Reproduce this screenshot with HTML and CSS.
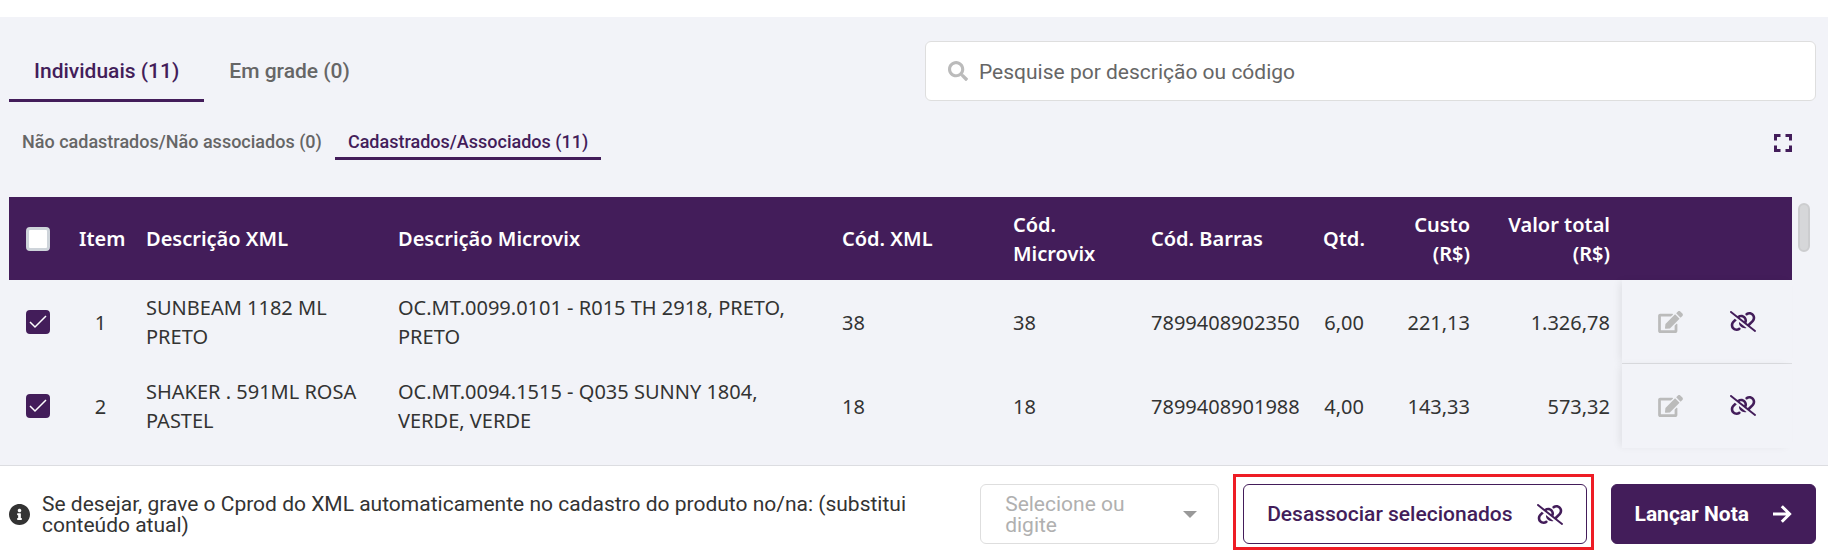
FILE: index.html
```html
<!DOCTYPE html>
<html lang="pt-BR">

<head>
    <meta charset="UTF-8">
    <meta name="viewport" content="width=device-width, initial-scale=1.0">
    <title>Produtos da nota</title>
    <link rel="stylesheet" href="styles.css">
</head>

<body>
    <!-- ícones reutilizados -->
    <svg class="sprite" aria-hidden="true">
        <symbol id="icon-edit" viewBox="0 0 576 512">
            <path d="M402.6 83.2l90.2 90.2c3.8 3.8 3.8 10 0 13.8L274.4 405.6l-92.8 10.3c-12.4 1.4-22.9-9.1-21.5-21.5l10.3-92.8L388.8 83.2c3.8-3.8 10-3.8 13.800 0zm162-22.900l-48.800-48.800c-15.200-15.200-39.900-15.200-55.200 0l-35.400 35.400c-3.800 3.800-3.800 10 0 13.800l90.200 90.200c3.800 3.800 10 3.800 13.800 0l35.400-35.400c15.200-15.300 15.200-40 0-55.200zM384 346.200V448H64V128h229.800c3.200 0 6.200-1.300 8.500-3.500l40-40c7.600-7.600 2.200-20.500-8.500-20.500H48C21.500 64 0 85.500 0 112v352c0 26.500 21.500 48 48 48h352c26.500 0 48-21.500 48-48V306.200c0-10.700-12.900-16-20.500-8.500l-40 40c-2.200 2.300-3.500 5.300-3.500 8.500z"/>
        </symbol>
        <symbol id="icon-unlink" viewBox="0 0 640 512">
            <path d="M38.8 5.1C28.4-3.1 13.3-1.2 5.1 9.2S-1.2 34.7 9.2 42.9l592 464c10.4 8.2 25.5 6.3 33.7-4.1s6.3-25.5-4.1-33.7L489.3 358.2l90.5-90.5c56.5-56.5 56.5-148 0-204.5c-50-50-128.800-56.500-186.300-15.400l-1.600 1.100c-14.400 10.300-17.700 30.300-7.400 44.600s30.300 17.700 44.600 7.400l1.600-1.100c32.100-22.900 76-19.300 103.800 8.600c31.500 31.500 31.500 82.500 0 114l-96 96-31.900-25C430.900 239.600 420.100 175.100 377 132c-52.200-52.300-134.500-56.200-191.300-11.700L38.800 5.100zM239 162c30.100-14.900 67.700-9.900 92.800 15.300c20 20 27.500 48.300 21.700 74.500L239 162zM406.600 416.400L220.900 270c-2.100 39.800 12.200 80.100 42.200 110c38.900 38.900 94.400 51 143.600 36.300zm-290-228.500L60.200 244.300c-56.500 56.500-56.500 148 0 204.500c50 50 128.800 56.500 186.300 15.400l1.600-1.100c14.400-10.300 17.700-30.300 7.400-44.600s-30.300-17.700-44.600-7.400l-1.600 1.100c-32.100 22.900-76 19.300-103.800-8.600C74 372 74 321 105.500 289.500l61.800-61.800-50.600-39.900z"/>
        </symbol>
    </svg>

    <div class="page">
        <main class="panel">
            <div class="toolbar">
                <nav class="tabs">
                    <button type="button" class="tab active">Individuais (11)</button>
                    <button type="button" class="tab">Em grade (0)</button>
                </nav>
                <div class="search">
                    <svg class="search-icon" viewBox="0 0 512 512" aria-hidden="true">
                        <path d="M505 442.7L405.3 343c-4.5-4.5-10.6-7-17-7H372c27.6-35.3 44-79.7 44-128C416 93.1 322.9 0 208 0S0 93.1 0 208s93.1 208 208 208c48.3 0 92.7-16.4 128-44v16.3c0 6.4 2.5 12.5 7 17l99.7 99.7c9.4 9.4 24.6 9.4 33.9 0l28.3-28.3c9.4-9.4 9.4-24.6.1-34zM208 336c-70.700 0-128-57.200-128-128 0-70.700 57.200-128 128-128 70.700 0 128 57.200 128 128 0 70.700-57.200 128-128 128z"/>
                    </svg>
                    <input type="text" id="search" aria-label="Pesquisar" placeholder="Pesquise por descrição ou código">
                </div>
            </div>

            <div class="subbar">
                <nav class="subtabs">
                    <button type="button" class="subtab">Não cadastrados/Não associados (0)</button>
                    <button type="button" class="subtab active">Cadastrados/Associados (11)</button>
                </nav>
                <button type="button" class="expand" aria-label="Tela cheia">
                    <svg viewBox="0 0 18 18" aria-hidden="true">
                        <path fill="none" stroke="currentColor" stroke-width="3" d="M1.5 6.5v-5h5M11.5 1.5h5v5M16.5 11.5v5h-5M6.5 16.5h-5v-5"/>
                    </svg>
                </button>
            </div>

            <div class="table-area">
                <table class="items">
                    <colgroup>
                        <col class="col-check">
                        <col class="col-item">
                        <col class="col-xml">
                        <col class="col-microvix">
                        <col class="col-cod-xml">
                        <col class="col-cod-microvix">
                        <col class="col-barras">
                        <col class="col-qtd">
                        <col class="col-custo">
                        <col class="col-total">
                        <col class="col-actions">
                    </colgroup>
                    <thead>
                        <tr>
                            <th class="check"><input type="checkbox" class="checkbox" aria-label="Selecionar todos"></th>
                            <th class="center">Item</th>
                            <th>Descrição XML</th>
                            <th>Descrição Microvix</th>
                            <th>Cód. XML</th>
                            <th>Cód. Microvix</th>
                            <th>Cód. Barras</th>
                            <th class="right">Qtd.</th>
                            <th class="right">Custo (R$)</th>
                            <th class="right">Valor total (R$)</th>
                            <th></th>
                        </tr>
                    </thead>
                    <tbody>
                        <tr>
                            <td class="check"><input type="checkbox" class="checkbox" aria-label="Selecionar item 1" checked></td>
                            <td class="center">1</td>
                            <td>SUNBEAM 1182 ML PRETO</td>
                            <td>OC.MT.0099.0101 - R015 TH 2918, PRETO, PRETO</td>
                            <td>38</td>
                            <td>38</td>
                            <td>7899408902350</td>
                            <td class="right">6,00</td>
                            <td class="right">221,13</td>
                            <td class="right">1.326,78</td>
                            <td class="actions">
                                <div class="action-list">
                                    <button type="button" class="action" aria-label="Editar" disabled><svg class="edit-icon"><use href="#icon-edit"/></svg></button>
                                    <button type="button" class="action" aria-label="Desassociar"><svg class="unlink-icon"><use href="#icon-unlink"/></svg></button>
                                </div>
                            </td>
                        </tr>
                        <tr>
                            <td class="check"><input type="checkbox" class="checkbox" aria-label="Selecionar item 2" checked></td>
                            <td class="center">2</td>
                            <td>SHAKER . 591ML ROSA PASTEL</td>
                            <td>OC.MT.0094.1515 - Q035 SUNNY 1804, VERDE, VERDE</td>
                            <td>18</td>
                            <td>18</td>
                            <td>7899408901988</td>
                            <td class="right">4,00</td>
                            <td class="right">143,33</td>
                            <td class="right">573,32</td>
                            <td class="actions">
                                <div class="action-list">
                                    <button type="button" class="action" aria-label="Editar" disabled><svg class="edit-icon"><use href="#icon-edit"/></svg></button>
                                    <button type="button" class="action" aria-label="Desassociar"><svg class="unlink-icon"><use href="#icon-unlink"/></svg></button>
                                </div>
                            </td>
                        </tr>
                    </tbody>
                </table>
                <div class="scroll-thumb"></div>
            </div>
        </main>

        <footer class="footer">
            <svg class="info-icon" viewBox="8 8 496 496" aria-hidden="true">
                <path d="M256 8C119 8 8 119.1 8 256c0 137 111 248 248 248s248-111 248-248C504 119.1 393 8 256 8zm0 110c23.2 0 42 18.8 42 42s-18.8 42-42 42-42-18.8-42-42 18.8-42 42-42zm56 254c0 6.6-5.400 12-12 12h-88c-6.600 0-12-5.400-12-12v-24c0-6.600 5.400-12 12-12h12v-64h-12c-6.600 0-12-5.400-12-12v-24c0-6.600 5.400-12 12-12h64c6.600 0 12 5.400 12 12v100h12c6.600 0 12 5.400 12 12v24z"/>
            </svg>
            <p class="footer-text">Se desejar, grave o Cprod do XML automaticamente no cadastro do produto no/na: (substitui conteúdo atual)</p>

            <div class="dropdown">
                <select id="destino">
                    <option value=""></option>
                </select>
                <label for="destino">Selecione ou digite</label>
                <svg class="caret" viewBox="0 0 14 7" aria-hidden="true"><path d="M0 0h14L7 7z"/></svg>
            </div>

            <div class="highlight">
                <button type="button" class="btn btn-outline">Desassociar selecionados <svg class="unlink-icon"><use href="#icon-unlink"/></svg></button>
            </div>
            <button type="button" class="btn btn-primary">Lançar Nota
                <svg class="arrow-icon" viewBox="0 0 19 18" aria-hidden="true"><path fill="none" stroke="currentColor" stroke-width="3" d="M0 9h17M8.800 1.200L16.600 9l-7.800 7.800"/></svg>
            </button>
        </footer>
    </div>
</body>

</html>
```
FILE: styles.css
```css
* {
    box-sizing: border-box;
}

body {
    margin: 0;
    background: #fff;
    color: #333;
    font-family: Roboto, sans-serif;
    font-size: 21px;
    line-height: 21px;
}

button,
input,
select {
    font: inherit;
    color: inherit;
}

button {
    padding: 0;
    border: 0;
    background: none;
    cursor: pointer;
}

svg {
    display: block;
    flex-shrink: 0;
    fill: currentColor;
}

.sprite {
    position: absolute;
    width: 0;
    height: 0;
}

.page {
    padding: 17px 3px 0 0;
}

.panel {
    padding: 24px 12px 17px 9px;
    background: #f2f3f8;
}

/* abas e busca */
.toolbar {
    display: grid;
    grid-template-columns: 1fr 1fr;
    gap: 25px;
    align-items: start;
}

.tabs,
.subtabs {
    display: flex;
}

.tab,
.subtab {
    color: #666;
    font-weight: 500;
    border-bottom: 3px solid transparent;
}

.tab {
    height: 61px;
    padding: 2px 25px 0;
}

.tab.active,
.subtab.active {
    color: #431d5a;
    border-bottom-color: #431d5a;
}

.search {
    display: flex;
    align-items: center;
    gap: 11px;
    height: 60px;
    padding: 0 22px;
    background: #fff;
    border: 1px solid #dedede;
    border-radius: 6px;
}

.search-icon {
    width: 20px;
    height: 20px;
    color: #bbb;
}

.search input {
    flex: 1;
    padding: 2px 0 0;
    border: 0;
    outline: 0;
    background: none;
}

.search input::placeholder {
    color: #666;
}

.subbar {
    display: flex;
    justify-content: space-between;
    align-items: flex-start;
    margin-top: 29px;
    padding-right: 24px;
}

.subtab {
    padding: 0 13px 5px;
    font-size: 18px;
}

.expand {
    padding-top: 3px;
    color: #431d5a;
}

.expand svg {
    width: 18px;
    height: 18px;
}

/* tabela */
.table-area {
    display: flex;
    align-items: flex-start;
    gap: 6px;
    margin-top: 37px;
    padding-right: 6px;
}

.items {
    flex: 1;
    table-layout: fixed;
    width: 100%;
    border-spacing: 0;
    font-family: "Noto Sans", sans-serif;
    font-size: 20px;
    line-height: 29px;
}

.col-check { width: 58px; }
.col-item { width: 67px; }
.col-xml { width: 252px; }
.col-cod-xml { width: 171px; }
.col-cod-microvix { width: 138px; }
.col-barras { width: 172px; }
.col-qtd { width: 65px; }
.col-custo { width: 106px; }
.col-total { width: 140px; }
.col-actions { width: 170px; }

.items th,
.items td {
    height: 84px;
    padding: 0 12px;
    text-align: left;
    vertical-align: middle;
}

.items th {
    height: 83px;
    background: #431d5a;
    color: #fff;
    font-weight: 600;
}

.items .center {
    text-align: center;
}

.items .right {
    text-align: right;
}

.items .check {
    padding: 0 17px;
}

.checkbox {
    appearance: none;
    display: block;
    width: 24px;
    height: 24px;
    margin: 0;
    background: #fff;
    border: 3px solid #ced4da;
    border-radius: 4px;
}

.checkbox:checked {
    border-color: #431d5a;
    background: #431d5a url("data:image/svg+xml,%3Csvg xmlns='http://www.w3.org/2000/svg' viewBox='0 0 18 18'%3E%3Cpath d='M1 9l5 5L17 3' fill='none' stroke='white' stroke-width='1.5'/%3E%3C/svg%3E") center / 18px no-repeat;
}

.items .actions {
    padding: 0 36px;
    background: #f2f3f8;
    border-bottom: 1px solid #dcdde1;
    box-shadow: -4px 0 8px -2px rgba(0, 0, 0, 0.08);
}

.items tr:last-child .actions {
    border-bottom-color: transparent;
}

.action-list {
    display: flex;
    justify-content: space-between;
    align-items: center;
}

.action {
    color: #431d5a;
}

.action:disabled {
    color: #bbb;
}

.edit-icon {
    width: 25px;
    height: 22px;
}

.unlink-icon {
    width: 26px;
    height: 21px;
}

.scroll-thumb {
    width: 12px;
    height: 49px;
    margin-top: 6px;
    background: #d6d7d9;
    border: 2px solid #cccdcf;
    border-radius: 6px;
}

/* rodapé */
.footer {
    display: flex;
    align-items: center;
    gap: 24px;
    padding: 18px 12px 11px 9px;
    border-top: 1px solid #dcdde1;
}

.info-icon {
    width: 21px;
    height: 21px;
    margin-right: -12px;
}

.footer-text {
    flex: 1;
    margin: 0;
    padding-top: 2px;
}

.dropdown {
    display: grid;
    grid-template-columns: 1fr 14px;
    align-items: center;
    width: 239px;
    height: 60px;
    padding: 0 21px 0 24px;
    border: 1px solid #dedede;
    border-radius: 6px;
    color: #b0b0b0;
}

.dropdown select {
    grid-area: 1 / 1 / 2 / 3;
    appearance: none;
    height: 42px;
    border: 0;
    outline: 0;
    background: none;
}

.dropdown label {
    grid-area: 1 / 1 / 2 / 2;
    padding: 2px 24px 0 0;
    pointer-events: none;
}

.caret {
    grid-area: 1 / 2 / 2 / 3;
    width: 14px;
    height: 7px;
    color: #999;
    pointer-events: none;
}

.btn {
    display: flex;
    align-items: center;
    gap: 24px;
    height: 60px;
    padding: 0 23px;
    border: 1px solid #431d5a;
    border-radius: 6px;
    font-weight: 500;
}

.btn-outline {
    background: #fff;
    color: #431d5a;
}

.btn-primary {
    background: #431d5a;
    color: #fff;
    font-weight: 700;
}

.arrow-icon {
    width: 19px;
    height: 18px;
}

.highlight {
    position: relative;
}

/* moldura de destaque em volta do botão */
.highlight::after {
    content: "";
    position: absolute;
    inset: -10px -7px -6px -10px;
    border: 3px solid #ee1c25;
    pointer-events: none;
}
```
